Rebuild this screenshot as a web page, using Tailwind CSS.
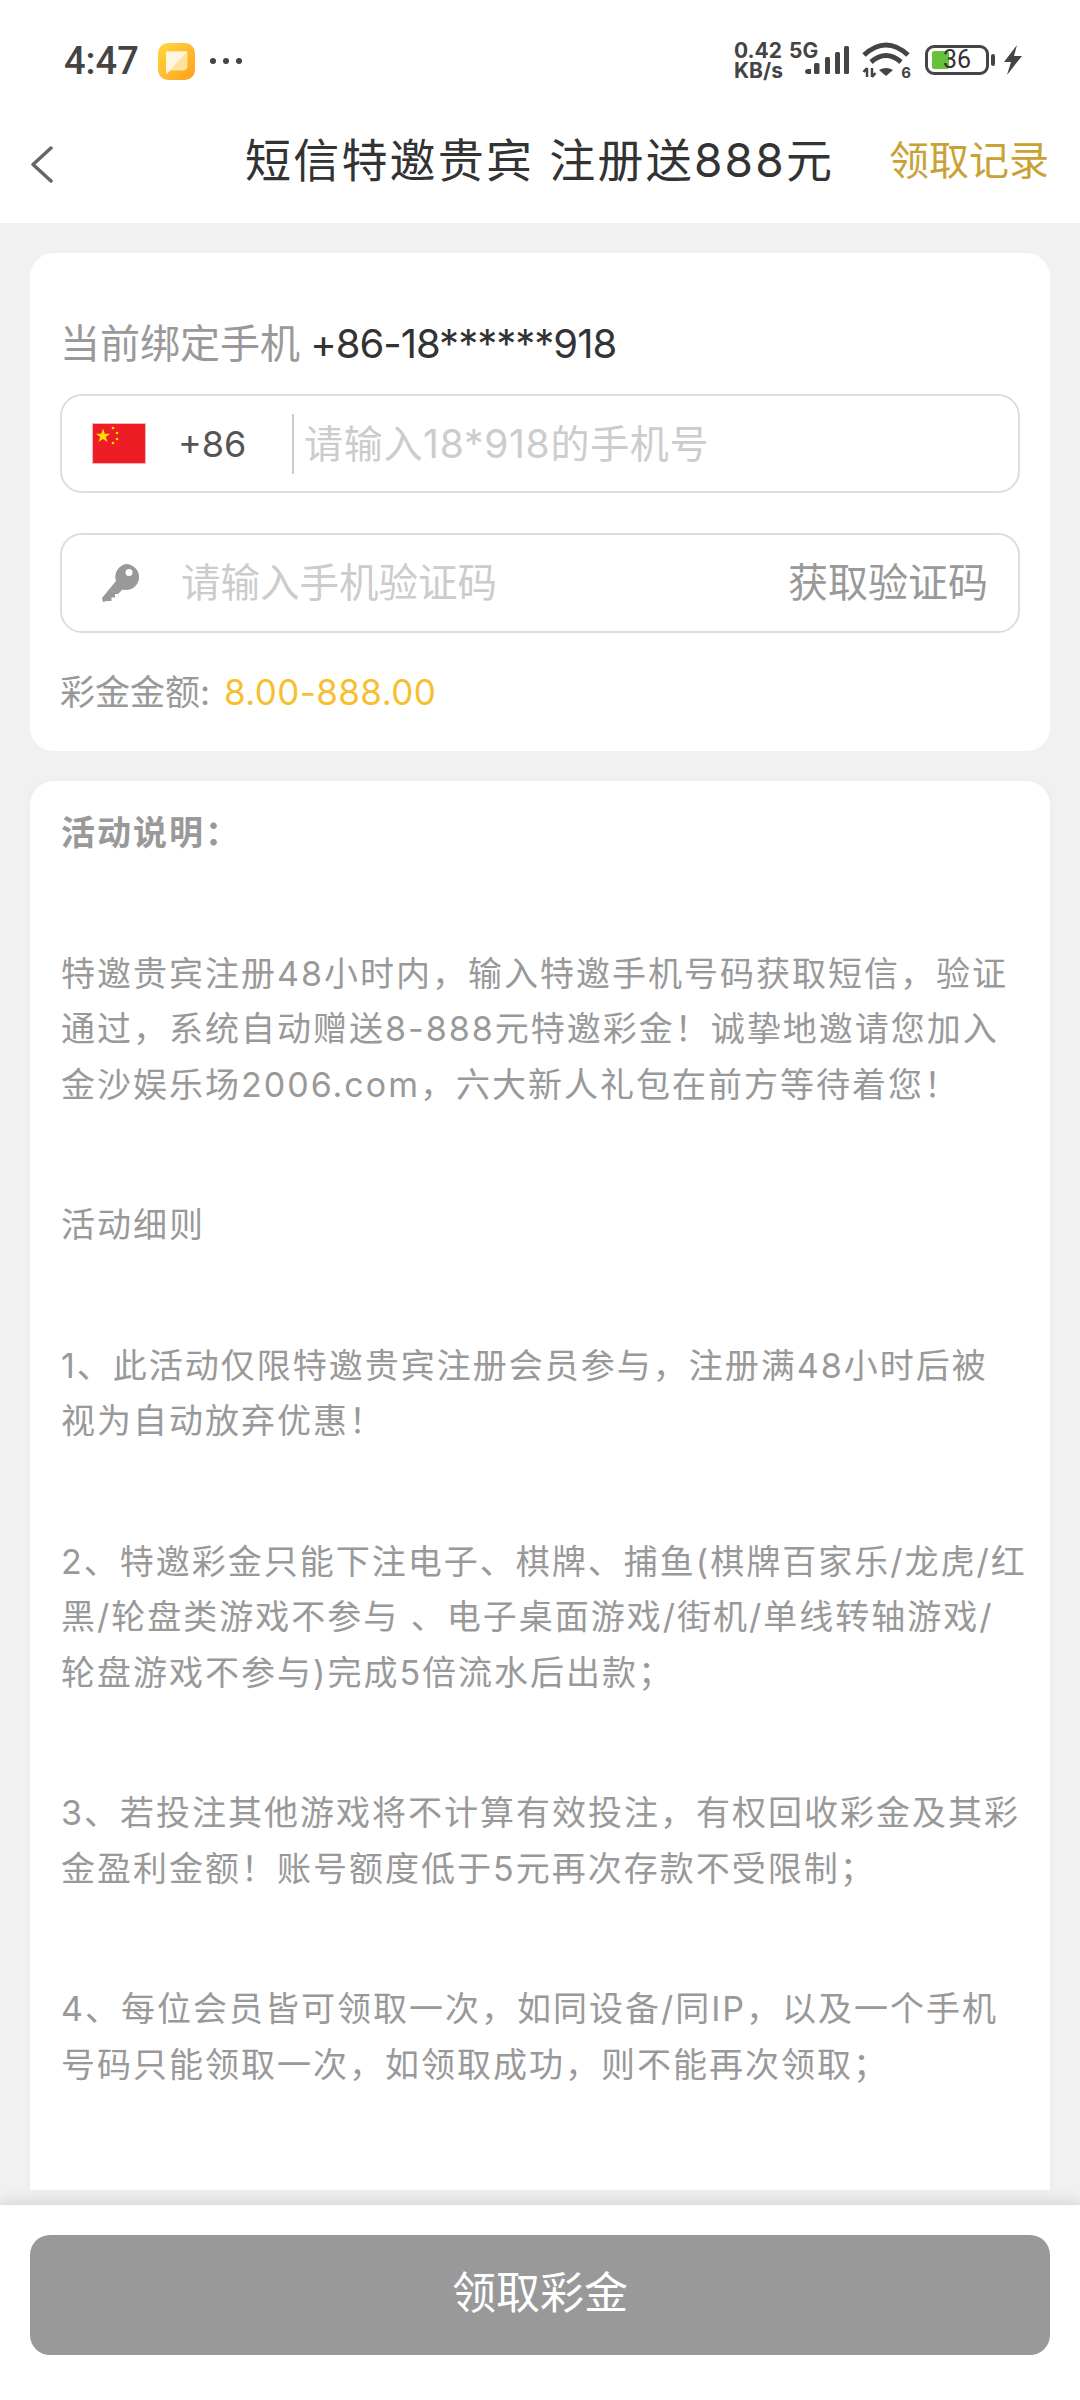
<!DOCTYPE html>
<html lang="zh-CN">
<head>
<meta charset="utf-8">
<script src="https://cdn.jsdelivr.net/npm/@tailwindcss/browser@4"></script>
</head>
<body class="m-0">
<div class="w-[1080px] h-[2400px] flex flex-col overflow-hidden bg-[#f1f1f1] font-['Inter','Noto_Sans_CJK_SC',sans-serif]">
  <!-- status bar -->
  <div class="h-[100px] bg-white flex items-start justify-between shrink-0 relative">
    <div class="flex items-center pl-[64px] pt-[38px] h-[84px]">
      <span class="text-[38px] leading-[44px] font-medium text-[#444] w-[94px] font-['Roboto',sans-serif]">4:47</span>
      <svg width="37" height="37" viewBox="0 0 37 37">
        <defs><linearGradient id="g" x1="0" y1="0" x2="1" y2="1"><stop offset="0" stop-color="#ffd83f"/><stop offset="1" stop-color="#ff9f1c"/></linearGradient></defs>
        <rect width="37" height="37" rx="10" fill="url(#g)"/>
        <path d="M8 8.500h21.500v14c0 3-2 5-5 5H13l-5 4z" fill="#ffe2a0"/>
        <path d="M8 8.500h21.500L8 31z" fill="#fff6e2"/>
      </svg>
      <span class="flex gap-[7px] ml-[15px]"><i class="block w-[6px] h-[6px] rounded-full bg-[#444]"></i><i class="block w-[6px] h-[6px] rounded-full bg-[#444]"></i><i class="block w-[6px] h-[6px] rounded-full bg-[#444]"></i></span>
    </div>
    <div class="flex items-start pr-[58px] pt-[41px]">
      <div class="w-[55px] text-[21px] leading-[20px] font-bold text-[#444] font-['Inter',sans-serif]">
        <div>0.42</div>
        <div>KB/s</div>
      </div>
      <div class="relative w-[60px] h-[34px]">
        <span class="absolute left-0 top-0 text-[21px] leading-[20px] font-bold text-[#444]">5G</span>
        <svg class="absolute left-[16px] top-[5px]" width="44" height="28" viewBox="0 0 44 28" fill="#444">
          <path d="M0 26a3 3 0 0 1 3-3h3v5H3a3 3 0 0 1-3-3z"/>
          <rect x="9" y="17" width="5.500" height="11" rx="1.500"/>
          <rect x="20" y="11" width="5" height="17" rx="1.500"/>
          <rect x="30" y="6" width="5" height="22" rx="1.500"/>
          <rect x="39" y="0" width="5" height="28" rx="1.500"/>
        </svg>
      </div>
      <div class="relative w-[48px] h-[38px] ml-[13px]">
        <svg class="absolute left-0 top-0" width="48" height="38" viewBox="0 0 48 38" fill="none" stroke="#444">
          <path d="M2 14Q24 -6 46 14" stroke-width="5"/>
          <path d="M9 21Q24 8 39 21" stroke-width="5"/>
          <path d="M17 29Q24 25 31 29L24 35z" fill="#444" stroke="none"/>
          <path d="M5 27v9M1.500 31l3.500-4M10 27v9M10 36l3.500-4" stroke-width="2.500"/>
        </svg>
        <span class="absolute right-[-1px] bottom-[-1px] text-[15px] leading-[15px] font-bold text-[#444]">6</span>
      </div>
      <div class="relative w-[64px] h-[30px] ml-[15px] mt-[4px] rounded-[9px] border-[3px] border-[#444]">
        <div class="absolute left-[4px] top-[3px] w-[17px] h-[18px] rounded-[2px] bg-[#66c23a]"></div>
        <span class="absolute left-[15px] top-0 text-[25px] leading-[24px] text-[#333] font-['Roboto',sans-serif]">36</span>
      </div>
      <div class="w-[4px] h-[12px] rounded-full bg-[#444] ml-[2px] mt-[13px]"></div>
      <svg class="ml-[9px] mt-[4px]" width="18" height="30" viewBox="0 0 18 30" fill="#444"><path d="M13 0L0 17h7L3 30 18 11h-8z"/></svg>
    </div>
  </div>
  <!-- nav -->
  <div class="h-[123px] bg-white relative flex items-center shrink-0">
    <svg class="absolute left-[30px] top-[46px]" width="24" height="37" viewBox="0 0 24 37" fill="none" stroke="#666" stroke-width="3.500" stroke-linecap="round" stroke-linejoin="round"><path d="M21 2L3 18.500 21 35"/></svg>
    <div class="absolute left-[245px] top-[30px] text-[46px] tracking-[2.2px] leading-[60px] text-[#333] whitespace-nowrap">短信特邀贵宾 注册送888元</div>
    <div class="absolute left-[889px] top-[35px] text-[40px] leading-[52px] text-[#c9a235] whitespace-nowrap">领取记录</div>
  </div>
  <!-- body -->
  <div class="h-[1982px] px-[30px] pt-[30px] flex flex-col gap-[30px] shrink-0 overflow-hidden">
    <div class="h-[498px] bg-white rounded-[24px] px-[30px] pt-[65px] shrink-0">
      <div class="text-[40px] leading-[52px] text-[#999] whitespace-nowrap">当前绑定手机 <span class="text-[#333] tracking-[-1px] ml-[-1px]">+86-18******918</span></div>
      <div class="h-[99px] mt-[24px] rounded-[22px] border-2 border-[#ddd] flex items-center">
        <svg class="ml-[30px]" width="54" height="41" viewBox="0 0 54 41">
          <rect width="54" height="41" fill="#f7b3b3"/>
          <rect x="1" y="1" width="52" height="39" fill="#ee1c25"/>
          <path d="M11 5.500l1.700 5.200h5.500l-4.400 3.200 1.700 5.200-4.500-3.200-4.500 3.200 1.700-5.200-4.400-3.200h5.500z" fill="#ffde00"/>
          <circle cx="21" cy="5" r="1.300" fill="#ffde00"/><circle cx="25" cy="10" r="1.300" fill="#ffde00"/><circle cx="25" cy="16" r="1.300" fill="#ffde00"/><circle cx="21" cy="20" r="1.300" fill="#ffde00"/>
        </svg>
        <span class="ml-[32px] w-[114px] text-[36px] leading-[48px] text-[#555]">+86</span>
        <div class="w-[2px] h-[60px] bg-[#ccc]"></div>
        <span class="ml-[10px] text-[39px] tracking-[0.7px] leading-[52px] text-[#ccc] whitespace-nowrap">请输入18*918的手机号</span>
      </div>
      <div class="h-[100px] mt-[40px] rounded-[22px] border-2 border-[#ddd] flex items-center justify-between pr-[30px]">
        <div class="flex items-center">
          <svg class="ml-[40px]" width="37" height="38" viewBox="0 0 37 38" fill="#999">
            <path fill-rule="evenodd" d="M24 0a13 13 0 1 1-3.500 25.500L16 30h-3v3.500H9.500V37H5L1 38 0 34 14 17A13 13 0 0 1 24 0zm3 5a3.500 3.500 0 1 0 0 7 3.500 3.500 0 0 0 0-7z"/>
          </svg>
          <span class="ml-[42px] text-[39.500px] leading-[52px] text-[#ccc] whitespace-nowrap">请输入手机验证码</span>
        </div>
        <span class="text-[40px] leading-[52px] text-[#999] whitespace-nowrap">获取验证码</span>
      </div>
      <div class="mt-[36px] text-[35px] leading-[46px] text-[#999] whitespace-nowrap">彩金金额: <span class="text-[#f7bf30] ml-[4px] tracking-[0.4px]">8.00-888.00</span></div>
    </div>
    <div class="h-[1409px] bg-white rounded-t-[24px] px-[31px] pt-[24px] flex flex-col gap-[85px] text-[34px] tracking-[2px] leading-[55.500px] text-[#999] whitespace-nowrap shrink-0 shadow-[0_0_12px_rgba(0,0,0,0.03)]">
      <div class="font-bold">活动说明：</div>
      <div>特邀贵宾注册48小时内，输入特邀手机号码获取短信，验证<br>通过，系统自动赠送8-888元特邀彩金！诚挚地邀请您加入<br>金沙娱乐场2006.com，六大新人礼包在前方等待着您！</div>
      <div>活动细则</div>
      <div>1、此活动仅限特邀贵宾注册会员参与，注册满48小时后被<br>视为自动放弃优惠！</div>
      <div>2、特邀彩金只能下注电子、棋牌、捕鱼(棋牌百家乐/龙虎/红<br>黑/轮盘类游戏不参与 、电子桌面游戏/街机/单线转轴游戏/<br>轮盘游戏不参与)完成5倍流水后出款；</div>
      <div>3、若投注其他游戏将不计算有效投注，有权回收彩金及其彩<br>金盈利金额！账号额度低于5元再次存款不受限制；</div>
      <div>4、每位会员皆可领取一次，如同设备/同IP，以及一个手机<br>号码只能领取一次，如领取成功，则不能再次领取；</div>
    </div>
  </div>
  <!-- footer -->
  <div class="relative z-10 h-[195px] bg-white px-[30px] pt-[30px] shrink-0 shadow-[0_-3px_14px_rgba(0,0,0,0.13)]">
    <div class="h-[120px] rounded-[20px] bg-[#999] flex items-center justify-center text-[44px] text-white leading-[58px] pb-[4px]">领取彩金</div>
  </div>
</div>
</body>
</html>
